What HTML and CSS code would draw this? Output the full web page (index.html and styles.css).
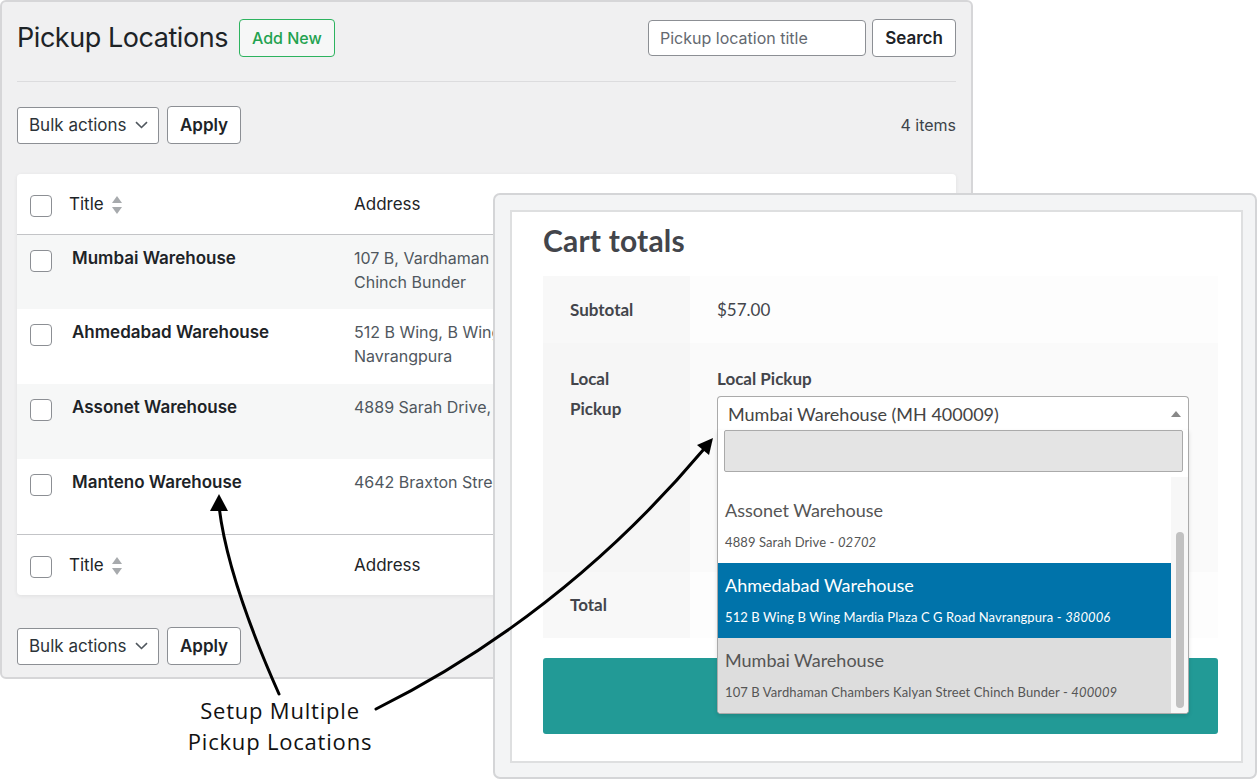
FILE: index.html
```html
<!DOCTYPE html>
<html lang="en">
<head>
<meta charset="utf-8">
<title>Pickup Locations</title>
<link rel="stylesheet" href="styles.css">
</head>
<body>
<div class="desk">
  <section class="admin">
    <header class="admin-head">
      <div class="title-group">
        <h1 class="page-title">Pickup Locations</h1>
        <a class="btn-add" href="#">Add New</a>
      </div>
      <form class="search-box">
        <input class="search-input" type="text" placeholder="Pickup location title">
        <button class="btn" type="button">Search</button>
      </form>
    </header>
    <hr class="rule">
    <div class="tablenav">
      <div class="bulk">
        <div class="select">Bulk actions
          <svg class="chev" width="13" height="8" viewBox="0 0 13 8"><path d="M1 1.2 L6.5 6.5 L12 1.2" fill="none" stroke="#50575e" stroke-width="1.6"/></svg>
        </div>
        <button class="btn" type="button">Apply</button>
      </div>
      <span class="count">4 items</span>
    </div>
    <div class="card">
      <table class="list">
        <colgroup><col class="c-cb"><col class="c-title"><col class="c-addr"><col class="c-rest"></colgroup>
        <thead>
          <tr>
            <th class="cb"><span class="checkbox"></span></th>
            <th class="th-title">Title <span class="sort"><i class="up"></i><i class="down"></i></span></th>
            <th class="th-addr">Address</th>
            <th></th>
          </tr>
        </thead>
        <tbody>
          <tr class="alt">
            <td class="cb"><span class="checkbox"></span></td>
            <td class="name">Mumbai Warehouse</td>
            <td class="addr">107 B, Vardhaman Chambers, Kalyan Street,<br>Chinch Bunder</td>
            <td></td>
          </tr>
          <tr>
            <td class="cb"><span class="checkbox"></span></td>
            <td class="name">Ahmedabad Warehouse</td>
            <td class="addr">512 B Wing, B Wing Mardia Plaza, C G Road,<br>Navrangpura</td>
            <td></td>
          </tr>
          <tr class="alt">
            <td class="cb"><span class="checkbox"></span></td>
            <td class="name">Assonet Warehouse</td>
            <td class="addr">4889 Sarah Drive, Assonet</td>
            <td></td>
          </tr>
          <tr>
            <td class="cb"><span class="checkbox"></span></td>
            <td class="name">Manteno Warehouse</td>
            <td class="addr">4642 Braxton Street, Manteno</td>
            <td></td>
          </tr>
        </tbody>
        <tfoot>
          <tr>
            <th class="cb"><span class="checkbox"></span></th>
            <th class="th-title">Title <span class="sort"><i class="up"></i><i class="down"></i></span></th>
            <th class="th-addr">Address</th>
            <th></th>
          </tr>
        </tfoot>
      </table>
    </div>
    <div class="tablenav tablenav-bottom">
      <div class="bulk">
        <div class="select">Bulk actions
          <svg class="chev" width="13" height="8" viewBox="0 0 13 8"><path d="M1 1.2 L6.5 6.5 L12 1.2" fill="none" stroke="#50575e" stroke-width="1.6"/></svg>
        </div>
        <button class="btn" type="button">Apply</button>
      </div>
    </div>
  </section>

  <section class="cart-window">
    <div class="cart-inner">
      <h2 class="cart-title">Cart totals</h2>
      <table class="totals">
        <tr>
          <th>Subtotal</th>
          <td>$57.00</td>
        </tr>
        <tr class="pickup-row">
          <th>Local<br>Pickup</th>
          <td>
            <div class="pickup-label">Local Pickup</div>
            <div class="combo">
              <span class="combo-value">Mumbai Warehouse (MH 400009)</span>
              <span class="combo-arrow"></span>
              <div class="dropdown">
                <div class="dd-search"><span class="dd-input"></span></div>
                <div class="dd-results">
                  <ul class="dd-list">
                    <li class="dd-item">
                      <div class="dd-name">Assonet Warehouse</div>
                      <div class="dd-addr">4889 Sarah Drive - <em>02702</em></div>
                    </li>
                    <li class="dd-item is-active">
                      <div class="dd-name">Ahmedabad Warehouse</div>
                      <div class="dd-addr">512 B Wing B Wing Mardia Plaza C G Road Navrangpura - <em>380006</em></div>
                    </li>
                    <li class="dd-item is-selected">
                      <div class="dd-name">Mumbai Warehouse</div>
                      <div class="dd-addr">107 B Vardhaman Chambers Kalyan Street Chinch Bunder - <em>400009</em></div>
                    </li>
                  </ul>
                  <div class="dd-track"><span class="dd-thumb"></span></div>
                </div>
              </div>
            </div>
            <div class="pickup-details"></div>
          </td>
        </tr>
        <tr class="total-row">
          <th>Total</th>
          <td></td>
        </tr>
      </table>
      <div class="checkout"></div>
    </div>
  </section>

  <svg class="arrows" width="1260" height="780" viewBox="0 0 1260 780">
    <path d="M279,694 Q227,577 219,506" fill="none" stroke="#000" stroke-width="3" stroke-linecap="round"/>
    <polygon points="219,494 210,511 228,511" fill="#000"/>
    <path d="M376,709 Q564,615 704,449" fill="none" stroke="#000" stroke-width="3" stroke-linecap="round"/>
    <polygon points="713,438 697,445 709,455" fill="#000"/>
  </svg>

  <p class="callout">Setup Multiple<br>Pickup Locations</p>
</div>
</body>
</html>
```

FILE: styles.css
```css
* { box-sizing: border-box; }

html, body {
  margin: 0;
  padding: 0;
  background: #ffffff;
}

.desk {
  position: relative;
  width: 1260px;
  height: 780px;
  overflow: hidden;
  background: #ffffff;
}

/* ---------- Admin panel ---------- */
.admin {
  width: 973px;
  height: 679px;
  border: 2px solid #d6d6d8;
  border-radius: 6px;
  background: #f0f0f1;
  padding: 16px 15px 0 15px;
  font-family: Inter, "Noto Sans", sans-serif;
  color: #1d2327;
}

.admin-head {
  display: flex;
  justify-content: space-between;
  align-items: center;
  height: 40px;
}

.title-group {
  display: flex;
  align-items: center;
}

.page-title {
  margin: 0;
  font-size: 27px;
  font-weight: 400;
  line-height: 40px;
  letter-spacing: -0.45px;
  color: #1d2327;
}

.btn-add {
  display: inline-flex;
  align-items: center;
  height: 38px;
  margin-left: 11px;
  padding: 0 12px;
  border: 1px solid #2db35f;
  border-radius: 4px;
  color: #22a24f;
  font-size: 16px;
  font-weight: 500;
  text-decoration: none;
  background: #f6f7f7;
}

.search-box {
  display: flex;
  align-items: center;
  margin: 0;
}

.search-input {
  width: 218px;
  height: 36px;
  padding: 0 11px;
  border: 1px solid #8c8f94;
  border-radius: 4px;
  font-family: Inter, "Noto Sans", sans-serif;
  font-size: 16px;
  color: #2c3338;
  background: #fff;
}
.search-input::placeholder { color: #646970; }

.btn {
  display: inline-flex;
  align-items: center;
  justify-content: center;
  height: 38px;
  padding: 0 13px;
  border: 1px solid #8c8f94;
  border-radius: 4px;
  background: #fff;
  font-family: Inter, "Noto Sans", sans-serif;
  font-size: 17px;
  font-weight: 600;
  color: #1d2327;
}

.search-box .btn {
  width: 84px;
  margin-left: 6px;
}

.rule {
  margin: 23px 0 0 0;
  border: 0;
  border-top: 1px solid #dcdcde;
  height: 0;
}

.tablenav {
  display: flex;
  justify-content: space-between;
  align-items: center;
  height: 38px;
  margin-top: 24px;
}

.tablenav-bottom { margin-top: 32px; }

.bulk {
  display: flex;
  align-items: center;
}

.select {
  display: flex;
  align-items: center;
  justify-content: space-between;
  width: 142px;
  height: 37px;
  padding: 0 10px 0 11px;
  border: 1px solid #8c8f94;
  border-radius: 3px;
  background: #fff;
  font-size: 17px;
  color: #2c3338;
}

.bulk .btn {
  width: 74px;
  margin-left: 8px;
}

.count {
  font-size: 16px;
  color: #3c434a;
}

.card {
  margin-top: 30px;
  width: 939px;
  background: #fff;
  border-radius: 4px;
  box-shadow: 0 1px 4px rgba(0, 0, 0, 0.07);
  overflow: hidden;
}

.list {
  width: 100%;
  border-collapse: collapse;
  table-layout: fixed;
}

.c-cb { width: 44px; }
.c-title { width: 283px; }
.c-addr { width: 150px; }

.list th {
  font-weight: 400;
  text-align: left;
  font-size: 17px;
  color: #1d2327;
  vertical-align: middle;
}

.list thead tr { height: 60px; border-bottom: 1px solid #c3c4c7; }
.list tfoot tr { height: 61px; border-top: 1px solid #c3c4c7; }

.list td {
  vertical-align: top;
  padding-top: 11px;
  line-height: 24px;
}

.list tbody tr { height: 75px; }
.list tbody tr.alt { background: #f6f7f7; }

.cb { padding-left: 13px; }

.checkbox {
  display: block;
  width: 22px;
  height: 22px;
  border: 1px solid #8c8f94;
  border-radius: 4px;
  background: #fff;
}
.list th .checkbox { margin-top: 4px; }
.list td .checkbox { margin-top: 4px; }

.th-title { padding-left: 8px; }

.sort {
  display: inline-flex;
  flex-direction: column;
  gap: 4px;
  margin-left: 4px;
  vertical-align: middle;
}
.sort i {
  display: block;
  width: 0;
  height: 0;
  border-left: 5px solid transparent;
  border-right: 5px solid transparent;
}
.sort .up { border-bottom: 7px solid #a7aaad; }
.sort .down { border-top: 7px solid #a7aaad; }

.th-addr { padding-left: 10px; white-space: nowrap; }

.name {
  padding-left: 11px;
  font-size: 17px;
  font-weight: 600;
  color: #1d2327;
}

.addr {
  padding-left: 10px;
  font-size: 16px;
  color: #50575e;
  white-space: nowrap;
  overflow: hidden;
  text-overflow: clip;
}

/* ---------- Cart window ---------- */
.cart-window {
  position: absolute;
  left: 493px;
  top: 193px;
  width: 764px;
  height: 586px;
  border: 2px solid #d4d5d7;
  border-radius: 7px;
  background: #f3f4f5;
  padding: 15px 12px 14px 15px;
  font-family: Lato, "Open Sans", sans-serif;
  color: #43454b;
}

.cart-inner {
  height: 100%;
  border: 2px solid #dedfe0;
  background: #fff;
  padding: 10px 23px 0 31px;
}

.cart-title {
  margin: 0 0 18px 0;
  font-size: 30px;
  line-height: 36px;
  font-weight: 700;
  color: #43454b;
  letter-spacing: 0.2px;
}

.totals {
  width: 675px;
  border-collapse: collapse;
}

.totals th {
  width: 147px;
  background: #f8f8f8;
  text-align: left;
  vertical-align: top;
  font-size: 17px;
  font-weight: 700;
  line-height: 30px;
  padding: 19px 27px 18px 27px;
}

.totals td {
  background: #fdfdfd;
  vertical-align: top;
  font-size: 17px;
  line-height: 30px;
  padding: 19px 27px 18px 27px;
}

.pickup-row th,
.pickup-row td { padding-top: 21px; padding-bottom: 0; background: #fafafa; }
.pickup-row th { background: #f6f6f6; }

.total-row th,
.total-row td { padding-top: 18px; padding-bottom: 18px; }

.pickup-label {
  font-weight: 700;
  line-height: 24px;
  margin-top: 3px;
}

.combo {
  position: relative;
  width: 472px;
  height: 34px;
  margin-top: 5px;
  border: 1px solid #aaa;
  border-bottom: 0;
  border-radius: 4px 4px 0 0;
  background: #fff;
  display: flex;
  align-items: center;
  justify-content: space-between;
  padding: 0 7px 0 10px;
}

.combo-value {
  font-size: 18px;
  color: #444;
  line-height: 24px;
}

.combo-arrow {
  width: 0;
  height: 0;
  border-left: 5px solid transparent;
  border-right: 5px solid transparent;
  border-bottom: 6px solid #888;
}

.pickup-details { height: 142px; }

.dropdown {
  position: absolute;
  left: -1px;
  right: -1px;
  top: 33px;
  z-index: 5;
  border: 1px solid #aaa;
  border-top: 0;
  border-radius: 0 0 4px 4px;
  background: #fff;
  box-shadow: 0 2px 4px rgba(0, 0, 0, 0.12);
  overflow: hidden;
}

.dd-search {
  padding: 0 5px 5px 6px;
}

.dd-input {
  display: block;
  height: 42px;
  border: 1px solid #aaa;
  border-radius: 2px;
  background: #e4e4e4;
}

.dd-results {
  display: flex;
  height: 236px;
}

.dd-list {
  flex: 1;
  margin: 0;
  padding: 11px 0 0 0;
  list-style: none;
}

.dd-item {
  height: 75px;
  padding: 10px 7px 0 7px;
  color: #555;
}

.dd-name {
  font-size: 18px;
  line-height: 24px;
}

.dd-addr {
  margin-top: 11px;
  font-size: 13px;
  line-height: 18px;
  letter-spacing: 0.1px;
}

.dd-item.is-active {
  background: #0073aa;
  color: #fff;
}

.dd-item.is-selected {
  background: #dddddd;
}

.dd-track {
  width: 17px;
  background: #f7f7f7;
  padding: 55px 0 0 5px;
}

.dd-thumb {
  display: block;
  width: 8px;
  height: 176px;
  border-radius: 4px;
  background: #c1c1c1;
}

.checkout {
  margin-top: 20px;
  width: 675px;
  height: 76px;
  border-radius: 3px;
  background: #229a96;
}

/* ---------- Annotation ---------- */
.arrows {
  position: absolute;
  left: 0;
  top: 0;
  z-index: 10;
  pointer-events: none;
}

.callout {
  position: absolute;
  left: 140px;
  top: 695px;
  width: 280px;
  margin: 0;
  text-align: center;
  font-family: "Open Sans", "Noto Sans", sans-serif;
  font-size: 22px;
  line-height: 31px;
  letter-spacing: 0.8px;
  color: #111;
  z-index: 10;
}
```
